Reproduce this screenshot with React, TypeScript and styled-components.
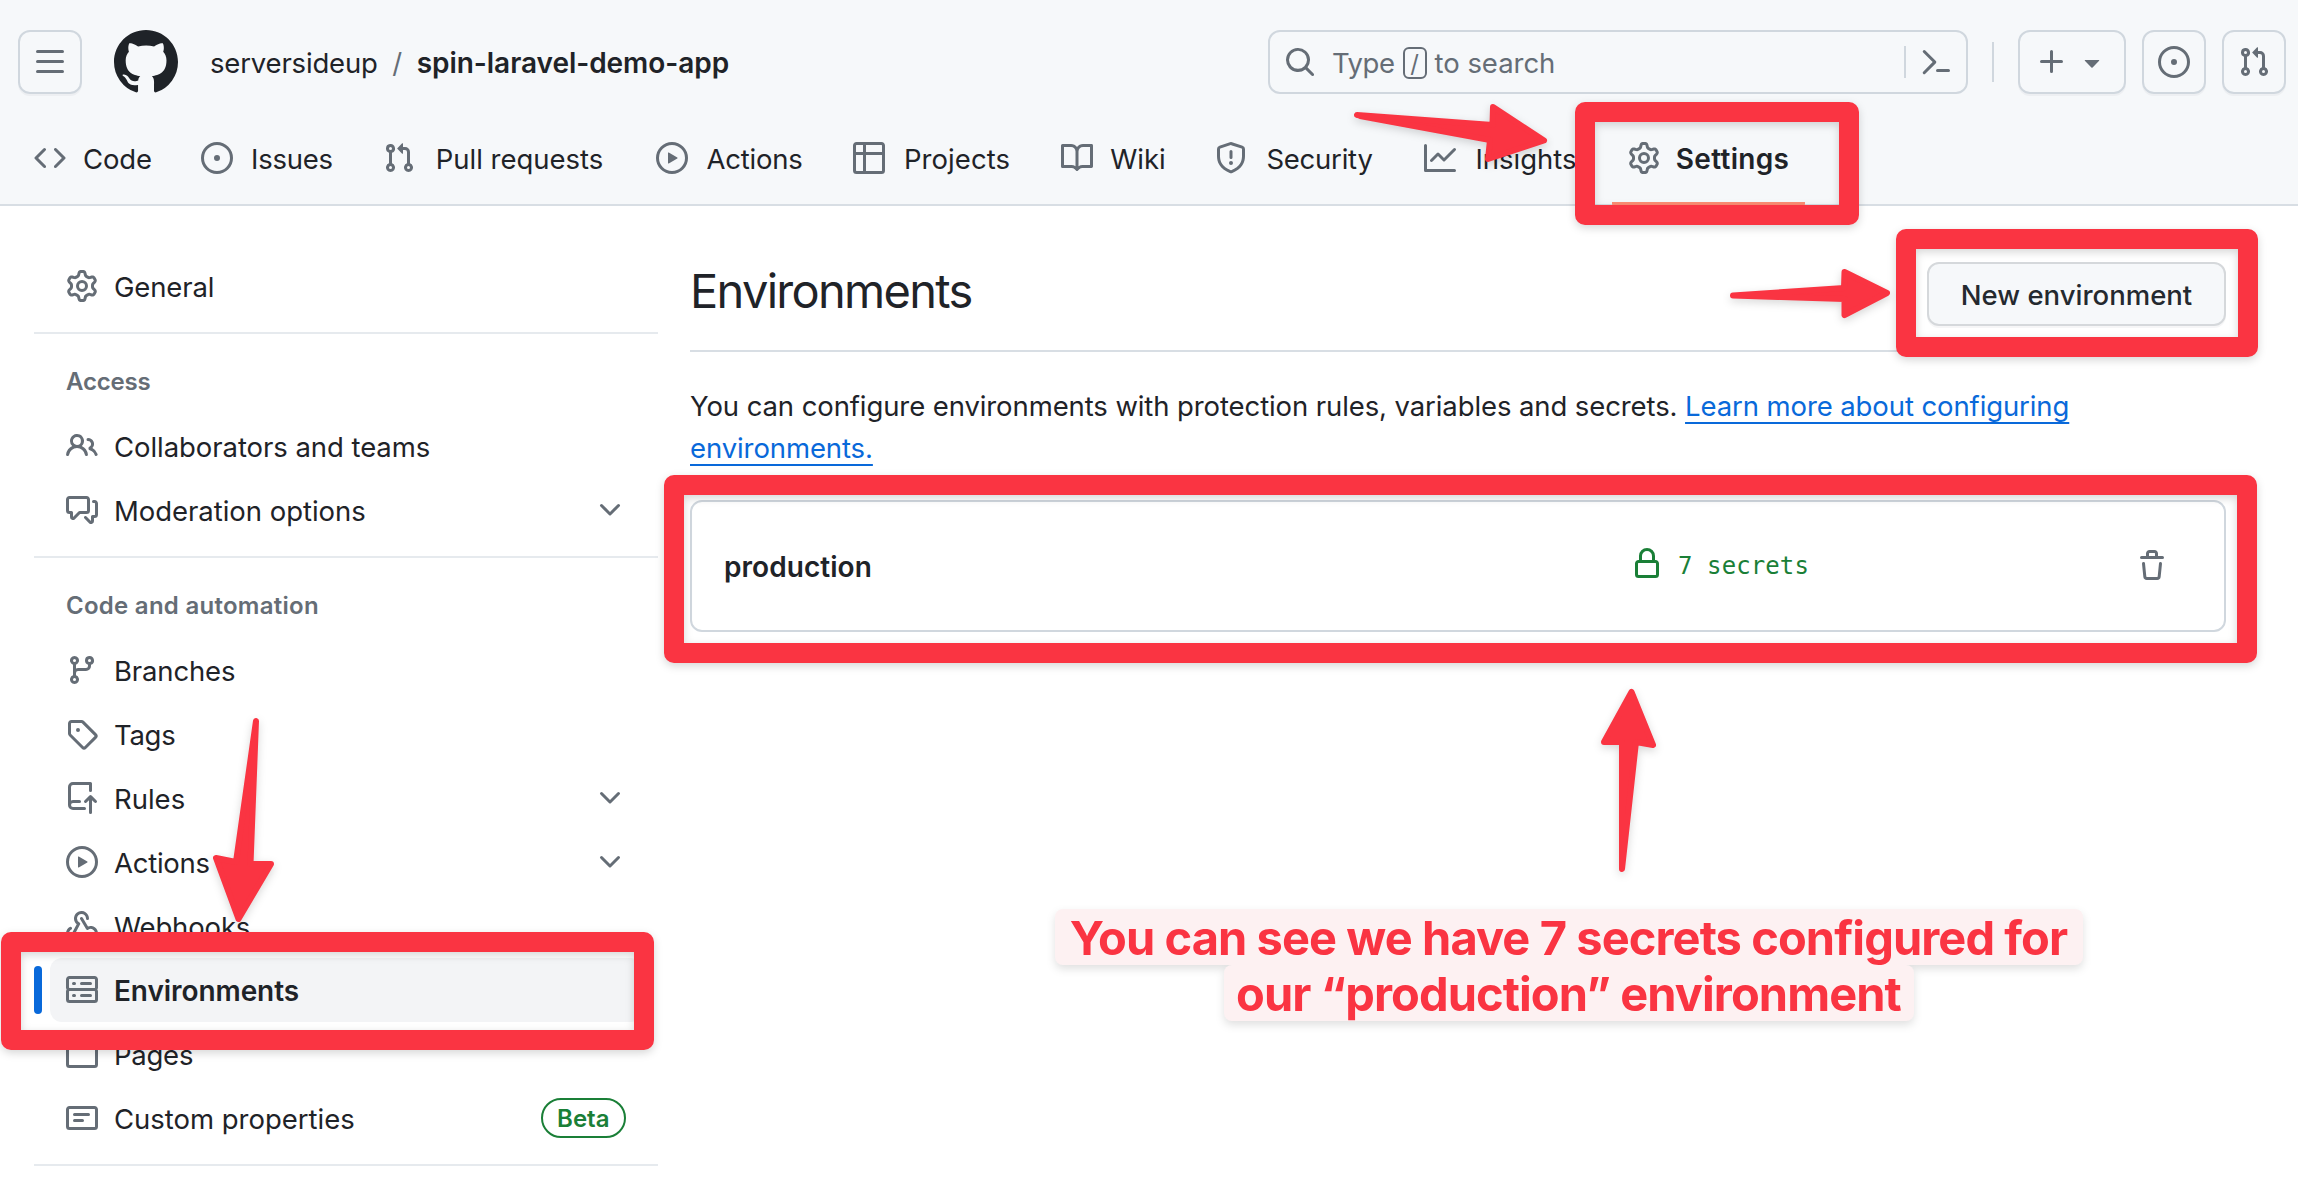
import React from 'react';
import styled, { createGlobalStyle, css } from 'styled-components';

const colors = {
  fg: '#1f2328',
  muted: '#656d76',
  border: '#d0d7de',
  subtle: '#f6f8fa',
  accent: '#0969da',
  success: '#1a7f37',
  mark: '#fa3442',
};

const sans = 'Inter, "Liberation Sans", sans-serif';

const GlobalStyle = createGlobalStyle`
  * { box-sizing: border-box; }
  body { margin: 0; background: #fff; color: ${colors.fg}; font-family: ${sans}; font-size: 27.5px; }
`;

/* ---------- icons ---------- */

const icons = {
  bars: 'M1 2.75A.75.75 0 0 1 1.75 2h12.5a.75.75 0 0 1 0 1.5H1.75A.75.75 0 0 1 1 2.75Zm0 5A.75.75 0 0 1 1.75 7h12.5a.75.75 0 0 1 0 1.5H1.75A.75.75 0 0 1 1 7.75ZM1.75 12h12.5a.75.75 0 0 1 0 1.5H1.75a.75.75 0 0 1 0-1.5Z',
  mark: 'M8 0c4.42 0 8 3.58 8 8a8.013 8.013 0 0 1-5.45 7.59c-.4.08-.55-.17-.55-.38 0-.27.01-1.13.01-2.2 0-.75-.25-1.23-.54-1.48 1.78-.2 3.65-.88 3.65-3.95 0-.88-.31-1.59-.82-2.15.08-.2.36-1.02-.08-2.12 0 0-.67-.22-2.2.82-.64-.18-1.32-.27-2-.27-.68 0-1.36.09-2 .27-1.53-1.03-2.2-.82-2.2-.82-.44 1.1-.16 1.92-.08 2.12-.51.56-.82 1.28-.82 2.15 0 3.06 1.86 3.75 3.64 3.95-.23.2-.44.55-.51 1.07-.46.21-1.61.55-2.33-.66-.15-.24-.6-.83-1.23-.82-.67.01-.27.38.01.53.34.19.73.9.82 1.13.16.45.68 1.31 2.69.94 0 .67.01 1.3.01 1.49 0 .21-.15.45-.55.38A7.995 7.995 0 0 1 0 8c0-4.42 3.58-8 8-8Z',
  search: 'M10.68 11.74a6 6 0 0 1-7.922-8.982 6 6 0 0 1 8.982 7.922l3.04 3.04a.749.749 0 0 1-.326 1.275.749.749 0 0 1-.734-.215ZM11.5 7a4.499 4.499 0 1 0-8.997 0A4.499 4.499 0 0 0 11.5 7Z',
  palette: 'm6.354 8.04-4.773 4.773a.75.75 0 1 0 1.061 1.06L7.945 8.57a.75.75 0 0 0 0-1.06L2.642 2.206a.75.75 0 0 0-1.06 1.061L6.353 8.04ZM8.75 11.5a.75.75 0 0 0 0 1.5h5.5a.75.75 0 0 0 0-1.5h-5.5Z',
  plus: 'M7.75 2a.75.75 0 0 1 .75.75V7h4.25a.75.75 0 0 1 0 1.5H8.5v4.25a.75.75 0 0 1-1.5 0V8.5H2.75a.75.75 0 0 1 0-1.5H7V2.75A.75.75 0 0 1 7.75 2Z',
  triangle: 'm4.427 7.427 3.396 3.396a.25.25 0 0 0 .354 0l3.396-3.396A.25.25 0 0 0 11.396 7H4.604a.25.25 0 0 0-.177.427Z',
  issue: 'M8 9.5a1.5 1.5 0 1 0 0-3 1.5 1.5 0 0 0 0 3ZM8 0a8 8 0 1 1 0 16A8 8 0 0 1 8 0ZM1.5 8a6.5 6.5 0 1 0 13 0 6.5 6.5 0 0 0-13 0Z',
  pull: 'M1.5 3.25a2.25 2.25 0 1 1 3 2.122v5.256a2.251 2.251 0 1 1-1.5 0V5.372A2.25 2.25 0 0 1 1.5 3.25Zm5.677-.177L9.573.677A.25.25 0 0 1 10 .854V2.5h1A2.5 2.5 0 0 1 13.5 5v5.628a2.251 2.251 0 1 1-1.5 0V5a1 1 0 0 0-1-1h-1v1.646a.25.25 0 0 1-.427.177L7.177 3.427a.25.25 0 0 1 0-.354ZM3.75 2.5a.75.75 0 1 0 0 1.5.75.75 0 0 0 0-1.5Zm0 9.5a.75.75 0 1 0 0 1.5.75.75 0 0 0 0-1.5Zm8.25.75a.75.75 0 1 0 1.5 0 .75.75 0 0 0-1.5 0Z',
  code: 'm11.28 3.22 4.25 4.25a.75.75 0 0 1 0 1.06l-4.25 4.25a.749.749 0 0 1-1.275-.326.749.749 0 0 1 .215-.734L13.94 8l-3.72-3.72a.749.749 0 0 1 .326-1.275.749.749 0 0 1 .734.215Zm-6.56 0a.751.751 0 0 1 1.042.018.751.751 0 0 1 .018 1.042L2.06 8l3.72 3.72a.749.749 0 0 1-.326 1.275.749.749 0 0 1-.734-.215L.47 8.53a.75.75 0 0 1 0-1.06Z',
  play: 'M8 0a8 8 0 1 1 0 16A8 8 0 0 1 8 0ZM1.5 8a6.5 6.5 0 1 0 13 0 6.5 6.5 0 0 0-13 0Zm4.879-2.773 4.264 2.559a.25.25 0 0 1 0 .428l-4.264 2.559A.25.25 0 0 1 6 10.559V5.442a.25.25 0 0 1 .379-.215Z',
  table: 'M0 1.75C0 .784.784 0 1.75 0h12.5C15.216 0 16 .784 16 1.75v12.5A1.75 1.75 0 0 1 14.25 16H1.75A1.75 1.75 0 0 1 0 14.25ZM6.5 6.5v8h7.75a.25.25 0 0 0 .25-.25V6.5Zm8-1.5V1.75a.25.25 0 0 0-.25-.25H6.5V5Zm-13 1.5v7.75c0 .138.112.25.25.25H5v-8ZM5 5V1.5H1.75a.25.25 0 0 0-.25.25V5Z',
  book: 'M0 1.75A.75.75 0 0 1 .75 1h4.253c1.227 0 2.317.59 3 1.501A3.743 3.743 0 0 1 11.006 1h4.245a.75.75 0 0 1 .75.75v10.5a.75.75 0 0 1-.75.75h-4.507a2.25 2.25 0 0 0-1.591.659l-.622.621a.75.75 0 0 1-1.06 0l-.622-.621A2.25 2.25 0 0 0 5.258 13H.75a.75.75 0 0 1-.75-.75Zm7.251 10.324.004-5.073-.002-2.253A2.25 2.25 0 0 0 5.003 2.5H1.5v9h3.757a3.75 3.75 0 0 1 1.994.574ZM8.755 4.75l-.004 7.322a3.752 3.752 0 0 1 1.992-.572H14.5v-9h-3.495a2.25 2.25 0 0 0-2.25 2.25Z',
  shield: 'M7.467.133a1.748 1.748 0 0 1 1.066 0l5.25 1.68A1.75 1.75 0 0 1 15 3.48V7c0 1.566-.32 3.182-1.303 4.682-.983 1.498-2.585 2.813-5.032 3.855a1.697 1.697 0 0 1-1.33 0c-2.447-1.042-4.049-2.357-5.032-3.855C1.32 10.182 1 8.566 1 7V3.48a1.75 1.75 0 0 1 1.217-1.667Zm.61 1.429a.25.25 0 0 0-.153 0l-5.25 1.68a.25.25 0 0 0-.174.238V7c0 1.358.275 2.666 1.057 3.86.784 1.194 2.121 2.34 4.366 3.297a.196.196 0 0 0 .154 0c2.245-.956 3.582-2.104 4.366-3.298C13.225 9.666 13.5 8.36 13.5 7V3.48a.251.251 0 0 0-.174-.237l-5.25-1.68ZM8.75 4.75v3a.75.75 0 0 1-1.5 0v-3a.75.75 0 0 1 1.5 0ZM9 10.5a1 1 0 1 1-2 0 1 1 0 0 1 2 0Z',
  graph: 'M1.5 1.75V13.5h13.75a.75.75 0 0 1 0 1.5H.75a.75.75 0 0 1-.75-.75V1.75a.75.75 0 0 1 1.5 0Zm14.28 2.53-5.25 5.25a.75.75 0 0 1-1.06 0L7 7.06 4.28 9.78a.751.751 0 0 1-1.042-.018.751.751 0 0 1-.018-1.042l3.25-3.25a.75.75 0 0 1 1.06 0L10 7.94l4.72-4.72a.751.751 0 0 1 1.042.018.751.751 0 0 1 .018 1.042Z',
  gear: 'M8 0a8.2 8.2 0 0 1 .701.031C9.444.095 9.99.645 10.16 1.29l.288 1.107c.018.066.079.158.212.224.231.114.454.243.668.386.123.082.233.09.299.071l1.103-.303c.644-.176 1.392.021 1.82.63.27.385.506.792.704 1.218.315.675.111 1.422-.364 1.891l-.814.806c-.049.048-.098.147-.088.294.016.257.016.515 0 .772-.01.147.038.246.088.294l.814.806c.475.469.679 1.216.364 1.891a7.977 7.977 0 0 1-.704 1.217c-.428.61-1.176.807-1.82.63l-1.102-.302c-.067-.019-.177-.011-.3.071a5.909 5.909 0 0 1-.668.386c-.133.066-.194.158-.211.224l-.29 1.106c-.168.646-.715 1.196-1.458 1.26a8.006 8.006 0 0 1-1.402 0c-.743-.064-1.289-.614-1.458-1.26l-.289-1.106c-.018-.066-.079-.158-.212-.224a5.738 5.738 0 0 1-.668-.386c-.123-.082-.233-.09-.299-.071l-1.103.303c-.644.176-1.392-.021-1.82-.63a8.12 8.12 0 0 1-.704-1.218c-.315-.675-.111-1.422.363-1.891l.815-.806c.05-.048.098-.147.088-.294a6.214 6.214 0 0 1 0-.772c.01-.147-.038-.246-.088-.294l-.815-.806C.635 6.045.431 5.298.746 4.623a7.92 7.92 0 0 1 .704-1.217c.428-.61 1.176-.807 1.82-.63l1.102.302c.067.019.177.011.3-.071.214-.143.437-.272.668-.386.133-.066.194-.158.211-.224l.29-1.106C6.009.645 6.556.095 7.299.03 7.53.01 7.764 0 8 0Zm-.571 1.525c-.036.003-.108.036-.137.146l-.289 1.105c-.147.561-.549.967-.998 1.189-.173.086-.34.183-.5.29-.417.278-.97.423-1.529.27l-1.103-.303c-.109-.03-.175.016-.195.045-.22.312-.412.644-.573.99-.014.031-.021.11.059.19l.815.806c.411.406.562.957.53 1.456a4.709 4.709 0 0 0 0 .582c.032.499-.119 1.05-.53 1.456l-.815.806c-.081.08-.073.159-.059.19.162.346.353.677.573.989.02.03.085.076.195.046l1.102-.303c.56-.153 1.113-.008 1.53.27.161.107.328.204.501.29.447.222.85.629.997 1.189l.289 1.105c.029.109.101.143.137.146a6.6 6.6 0 0 0 1.142 0c.036-.003.108-.036.137-.146l.289-1.105c.147-.561.549-.967.998-1.189.173-.086.34-.183.5-.29.417-.278.97-.423 1.529-.27l1.103.303c.109.029.175-.016.195-.045.22-.313.411-.644.573-.99.014-.031.021-.11-.059-.19l-.815-.806c-.411-.406-.562-.957-.53-1.456a4.709 4.709 0 0 0 0-.582c-.032-.499.119-1.05.53-1.456l.815-.806c.081-.08.073-.159.059-.19a6.464 6.464 0 0 0-.573-.989c-.02-.03-.085-.076-.195-.046l-1.102.303c-.56.153-1.113.008-1.53-.27a4.44 4.44 0 0 0-.501-.29c-.447-.222-.85-.629-.997-1.189l-.289-1.105c-.029-.11-.101-.143-.137-.146a6.6 6.6 0 0 0-1.142 0ZM11 8a3 3 0 1 1-6 0 3 3 0 0 1 6 0ZM9.5 8a1.5 1.5 0 1 0-3.001.001A1.5 1.5 0 0 0 9.5 8Z',
  people: 'M2 5.5a3.5 3.5 0 1 1 5.898 2.549 5.508 5.508 0 0 1 3.034 4.084.75.75 0 1 1-1.482.235 4 4 0 0 0-7.9 0 .75.75 0 0 1-1.482-.236A5.507 5.507 0 0 1 3.102 8.05 3.493 3.493 0 0 1 2 5.5ZM11 4a3.001 3.001 0 0 1 2.22 5.018 5.01 5.01 0 0 1 2.56 3.012.749.749 0 0 1-.885.954.752.752 0 0 1-.549-.514 3.507 3.507 0 0 0-2.522-2.372.75.75 0 0 1-.574-.73v-.352a.75.75 0 0 1 .416-.672A1.5 1.5 0 0 0 11 5.5.75.75 0 0 1 11 4Zm-5.5-.5a2 2 0 1 0-.001 3.999A2 2 0 0 0 5.5 3.5Z',
  discussion: 'M1.75 1h8.5c.966 0 1.75.784 1.75 1.75v5.5A1.75 1.75 0 0 1 10.25 10H7.061l-2.574 2.573A1.458 1.458 0 0 1 2 11.543V10h-.25A1.75 1.75 0 0 1 0 8.25v-5.5C0 1.784.784 1 1.75 1ZM1.5 2.75v5.5c0 .138.112.25.25.25h1a.75.75 0 0 1 .75.75v2.19l2.72-2.72a.749.749 0 0 1 .53-.22h3.5a.25.25 0 0 0 .25-.25v-5.5a.25.25 0 0 0-.25-.25h-8.5a.25.25 0 0 0-.25.25Zm13 2a.25.25 0 0 0-.25-.25h-.5a.75.75 0 0 1 0-1.5h.5c.966 0 1.75.784 1.75 1.75v5.5A1.75 1.75 0 0 1 14.25 12H14v1.543a1.458 1.458 0 0 1-2.487 1.03L9.22 12.28a.749.749 0 0 1 .326-1.275.749.749 0 0 1 .734.215l2.22 2.22v-2.19a.75.75 0 0 1 .75-.75h1a.25.25 0 0 0 .25-.25Z',
  chevron: 'M12.78 5.22a.749.749 0 0 1 0 1.06l-4.25 4.25a.749.749 0 0 1-1.06 0L3.22 6.28a.749.749 0 1 1 1.06-1.06L8 8.939l3.72-3.719a.749.749 0 0 1 1.06 0Z',
  branch: 'M9.5 3.25a2.25 2.25 0 1 1 3 2.122V6A2.5 2.5 0 0 1 10 8.5H6a1 1 0 0 0-1 1v1.128a2.251 2.251 0 1 1-1.5 0V5.372a2.25 2.25 0 1 1 1.5 0v1.836A2.493 2.493 0 0 1 6 7h4a1 1 0 0 0 1-1v-.628A2.25 2.25 0 0 1 9.5 3.25Zm-6 0a.75.75 0 1 0 1.5 0 .75.75 0 0 0-1.5 0Zm8.25-.75a.75.75 0 1 0 0 1.5.75.75 0 0 0 0-1.5ZM4.25 12a.75.75 0 1 0 0 1.5.75.75 0 0 0 0-1.5Z',
  tag: 'M1 7.775V2.75C1 1.784 1.784 1 2.75 1h5.025c.464 0 .91.184 1.238.513l6.25 6.25a1.75 1.75 0 0 1 0 2.474l-5.026 5.026a1.75 1.75 0 0 1-2.474 0l-6.25-6.25A1.752 1.752 0 0 1 1 7.775Zm1.5 0c0 .066.026.13.073.177l6.25 6.25a.25.25 0 0 0 .354 0l5.025-5.025a.25.25 0 0 0 0-.354l-6.25-6.25a.25.25 0 0 0-.177-.073H2.75a.25.25 0 0 0-.25.25ZM6 5a1 1 0 1 1 0 2 1 1 0 0 1 0-2Z',
  push: 'M1 2.5A2.5 2.5 0 0 1 3.5 0h8.75a.75.75 0 0 1 .75.75v3.5a.75.75 0 0 1-1.5 0V1.5h-8a1 1 0 0 0-1 1v6.708A2.493 2.493 0 0 1 3.5 9h3.25a.75.75 0 0 1 0 1.5H3.5a1 1 0 0 0 0 2h5.75a.75.75 0 0 1 0 1.5H3.5A2.5 2.5 0 0 1 1 11.5Zm13.23 7.79h-.001l-1.224-1.224v6.184a.75.75 0 0 1-1.5 0V9.066L10.28 10.29a.75.75 0 0 1-1.06-1.061l2.505-2.504a.75.75 0 0 1 1.06 0L15.29 9.23a.751.751 0 0 1-.018 1.042.751.751 0 0 1-1.042.018Z',
  webhook: 'M5.5 4.25a2.25 2.25 0 0 1 4.5 0 .75.75 0 0 0 1.5 0 3.75 3.75 0 1 0-6.14 2.889l-2.272 4.258a.75.75 0 0 0 1.324.706L7 7.25a.75.75 0 0 0-.309-1.015A2.25 2.25 0 0 1 5.5 4.25ZM7.364 3.607a.75.75 0 0 1 1.03.257l2.608 4.349a3.75 3.75 0 1 1-.628 6.785.75.75 0 0 1 .752-1.299 2.25 2.25 0 1 0-.033-3.88.75.75 0 0 1-1.03-.256L7.107 4.636a.75.75 0 0 1 .257-1.03ZM2.9 8.776A.75.75 0 0 1 2.625 9.8 2.25 2.25 0 1 0 6 11.75a.75.75 0 0 1 .75-.751h5.5a.75.75 0 0 1 0 1.5H7.425a3.751 3.751 0 1 1-5.55-3.998.75.75 0 0 1 1.024.274Z',
  server: 'M1.75 1h12.5c.966 0 1.75.784 1.75 1.75v4c0 .372-.116.717-.314 1 .198.283.314.628.314 1v4a1.75 1.75 0 0 1-1.75 1.75H1.75A1.75 1.75 0 0 1 0 12.75v-4c0-.358.109-.707.314-1a1.739 1.739 0 0 1-.314-1v-4C0 1.784.784 1 1.75 1ZM1.5 2.75v4c0 .138.112.25.25.25h12.5a.25.25 0 0 0 .25-.25v-4a.25.25 0 0 0-.25-.25H1.75a.25.25 0 0 0-.25.25Zm.25 5.75a.25.25 0 0 0-.25.25v4c0 .138.112.25.25.25h12.5a.25.25 0 0 0 .25-.25v-4a.25.25 0 0 0-.25-.25ZM7 4.75A.75.75 0 0 1 7.75 4h4.5a.75.75 0 0 1 0 1.5h-4.5A.75.75 0 0 1 7 4.75ZM7.75 10h4.5a.75.75 0 0 1 0 1.5h-4.5a.75.75 0 0 1 0-1.5ZM3 4.75A.75.75 0 0 1 3.75 4h.5a.75.75 0 0 1 0 1.5h-.5A.75.75 0 0 1 3 4.75ZM3.75 10h.5a.75.75 0 0 1 0 1.5h-.5a.75.75 0 0 1 0-1.5Z',
  browser: 'M0 2.75C0 1.784.784 1 1.75 1h12.5c.966 0 1.75.784 1.75 1.75v10.5A1.75 1.75 0 0 1 14.25 15H1.75A1.75 1.75 0 0 1 0 13.25ZM14.5 6h-13v7.25c0 .138.112.25.25.25h12.5a.25.25 0 0 0 .25-.25Zm-6-3.5v2h6V2.75a.25.25 0 0 0-.25-.25ZM5 2.5v2h2v-2Zm-3.25 0a.25.25 0 0 0-.25.25V4.5h2v-2Z',
  note: 'M0 3.75C0 2.784.784 2 1.75 2h12.5c.966 0 1.75.784 1.75 1.75v8.5A1.75 1.75 0 0 1 14.25 14H1.75A1.75 1.75 0 0 1 0 12.25Zm1.75-.25a.25.25 0 0 0-.25.25v8.5c0 .138.112.25.25.25h12.5a.25.25 0 0 0 .25-.25v-8.5a.25.25 0 0 0-.25-.25ZM3.5 6.25a.75.75 0 0 1 .75-.75h7a.75.75 0 0 1 0 1.5h-7a.75.75 0 0 1-.75-.75Zm.75 2.25h4a.75.75 0 0 1 0 1.5h-4a.75.75 0 0 1 0-1.5Z',
  lock: 'M4 4a4 4 0 0 1 8 0v2h.25c.966 0 1.75.784 1.75 1.75v5.5A1.75 1.75 0 0 1 12.25 15h-8.5A1.75 1.75 0 0 1 2 13.25v-5.5C2 6.784 2.784 6 3.75 6H4Zm8.25 3.5h-8.5a.25.25 0 0 0-.25.25v5.5c0 .138.112.25.25.25h8.5a.25.25 0 0 0 .25-.25v-5.5a.25.25 0 0 0-.25-.25ZM10.5 6V4a2.5 2.5 0 1 0-5 0v2Z',
  trash: 'M11 1.75V3h2.25a.75.75 0 0 1 0 1.5H2.75a.75.75 0 0 1 0-1.5H5V1.75C5 .784 5.784 0 6.75 0h2.5C10.216 0 11 .784 11 1.75ZM4.496 6.675l.66 6.6a.25.25 0 0 0 .249.225h5.19a.25.25 0 0 0 .249-.225l.66-6.6a.75.75 0 0 1 1.492.149l-.66 6.6A1.748 1.748 0 0 1 10.595 15h-5.19a1.75 1.75 0 0 1-1.741-1.575l-.66-6.6a.75.75 0 1 1 1.492-.15ZM6.5 1.75V3h3V1.75a.25.25 0 0 0-.25-.25h-2.5a.25.25 0 0 0-.25.25Z',
};

type IconName = keyof typeof icons;

const Glyph = styled.svg<{ $size: number }>`
  display: block;
  flex: none;
  width: ${(p) => p.$size}px;
  height: ${(p) => p.$size}px;
  fill: currentColor;
`;

const Icon = ({ name, size = 32 }: { name: IconName; size?: number }) => (
  <Glyph $size={size} viewBox="0 0 16 16" aria-hidden>
    <path d={icons[name]} />
  </Glyph>
);

/* ---------- shared ---------- */

const Text = styled.span<{ $ls?: number; $bold?: boolean }>`
  padding-top: 2px;
  line-height: 40px;
  white-space: nowrap;
  letter-spacing: ${(p) => p.$ls ?? 0}px;
  ${(p) => p.$bold && css`
    font-size: 28px;
    font-weight: 600;
  `}
`;

const Page = styled.div`
  position: relative;
  width: 2298px;
  height: 1200px;
  overflow: hidden;
  background: #fff;
`;

/* ---------- header ---------- */

const Header = styled.header`
  height: 206px;
  background: ${colors.subtle};
  border-bottom: 2px solid #d8dee4;
`;

const TopBar = styled.div`
  display: flex;
  align-items: center;
  height: 94px;
  padding: 30px 12px 0 18px;
`;

const SquareButton = styled.button`
  display: flex;
  flex: none;
  align-items: center;
  justify-content: center;
  gap: 8px;
  min-width: 64px;
  height: 64px;
  padding: 0 14px;
  color: ${colors.muted};
  background: transparent;
  border: 2px solid ${colors.border};
  border-radius: 12px;
  box-shadow: 0 2px 0 rgba(31, 35, 40, 0.04);
`;

const AddButton = styled(SquareButton)`
  padding: 0 16px;
`;

const Logo = styled.a`
  margin: 0 32px;
  color: ${colors.fg};
`;

const Crumbs = styled.nav`
  display: flex;
  align-items: center;
  flex: 1;
`;

const Slash = styled(Text)`
  width: 39px;
  text-align: center;
  color: ${colors.muted};
`;

const SearchBox = styled.div`
  display: flex;
  align-items: center;
  width: 700px;
  height: 64px;
  padding: 0 14px;
  color: ${colors.muted};
  border: 2px solid ${colors.border};
  border-radius: 12px;
`;

const SearchHint = styled.div`
  display: flex;
  flex: 1;
  align-items: center;
  margin-left: 16px;
`;

const KeyCap = styled.kbd`
  display: flex;
  align-items: center;
  justify-content: center;
  width: 24px;
  height: 32px;
  margin: 2px 8px 0 8px;
  font: 24px ${sans};
  border: 2px solid ${colors.muted};
  border-radius: 6px;
`;

const SearchDivider = styled.i`
  width: 2px;
  height: 32px;
  margin-right: 14px;
  background: ${colors.border};
`;

const BarDivider = styled.i`
  width: 2px;
  height: 40px;
  margin: 0 24px;
  background: ${colors.border};
`;

const Actions = styled.div`
  display: flex;
  gap: 16px;
`;

const Tabs = styled.nav`
  display: flex;
  gap: 16px;
  height: 112px;
  padding: 16px 0 0 18px;
`;

const Tab = styled.a<{ $active?: boolean }>`
  display: flex;
  align-items: center;
  gap: 16px;
  height: 96px;
  padding: 0 16px;
  color: ${colors.muted};
  ${(p) => p.$active && css`
    padding-top: 4px;
    border-bottom: 4px solid #fd8c73;
    border-radius: 2px;
  `}
`;

const TabLabel = styled(Text)<{ $w: number }>`
  width: ${(p) => p.$w}px;
  display: flex;
  justify-content: center;
  color: ${colors.fg};
`;

const tabs: { icon: IconName; label: string; w: number; ls?: number; active?: boolean }[] = [
  { icon: 'code', label: 'Code', w: 71, ls: -0.13 },
  { icon: 'issue', label: 'Issues', w: 86, ls: -0.24 },
  { icon: 'pull', label: 'Pull requests', w: 177 },
  { icon: 'play', label: 'Actions', w: 101, ls: -0.26 },
  { icon: 'table', label: 'Projects', w: 112, ls: 0.05 },
  { icon: 'book', label: 'Wiki', w: 58 },
  { icon: 'shield', label: 'Security', w: 113, ls: -0.23 },
  { icon: 'graph', label: 'Insights', w: 108 },
  { icon: 'gear', label: 'Settings', w: 113, ls: 0.3, active: true },
];

/* ---------- sidebar ---------- */

const Body = styled.div`
  display: flex;
  gap: 32px;
  padding: 0 72px 0 34px;
`;

const Sidebar = styled.aside`
  width: 624px;
  padding-top: 48px;
`;

const Group = styled.section`
  padding-bottom: 14px;
  margin-bottom: 16px;
  border-bottom: 2px solid #e6eaee;
`;

const GroupTitle = styled.h3<{ $ls?: number }>`
  height: 64px;
  margin: 0;
  padding: 0 32px;
  font-size: 24px;
  font-weight: 600;
  line-height: 64px;
  letter-spacing: ${(p) => p.$ls ?? 0}px;
  color: ${colors.muted};
`;

const Row = styled.a<{ $active?: boolean }>`
  position: relative;
  display: flex;
  align-items: center;
  gap: 16px;
  height: 64px;
  margin: 0 16px;
  padding: 0 16px;
  color: ${colors.muted};
  border-radius: 12px;
  ${(p) => p.$active && css`
    background: #f3f4f6;
    &::before {
      content: '';
      position: absolute;
      left: -16px;
      top: 8px;
      width: 8px;
      height: 48px;
      border-radius: 4px;
      background: ${colors.accent};
    }
  `}
`;

const RowLabel = styled(Text)`
  flex: 1;
  color: ${colors.fg};
`;

const Beta = styled.span`
  display: flex;
  align-items: center;
  height: 40px;
  padding: 0 14.5px;
  font-size: 24px;
  font-weight: 600;
  color: ${colors.success};
  border: 2px solid ${colors.success};
  border-radius: 20px;
`;

type RowData = { icon: IconName; label: string; ls?: number; expandable?: boolean; beta?: boolean; active?: boolean };

const groups: { title?: string; ls?: number; rows: RowData[] }[] = [
  { rows: [{ icon: 'gear', label: 'General', ls: -0.15 }] },
  {
    title: 'Access',
    ls: -0.2,
    rows: [
      { icon: 'people', label: 'Collaborators and teams', ls: -0.06 },
      { icon: 'discussion', label: 'Moderation options', ls: -0.04, expandable: true },
    ],
  },
  {
    title: 'Code and automation',
    ls: 0.27,
    rows: [
      { icon: 'branch', label: 'Branches', ls: -0.15 },
      { icon: 'tag', label: 'Tags', ls: -0.3 },
      { icon: 'push', label: 'Rules', expandable: true },
      { icon: 'play', label: 'Actions', ls: -0.26, expandable: true },
      { icon: 'webhook', label: 'Webhooks', ls: -0.15 },
      { icon: 'server', label: 'Environments', ls: -0.08, active: true },
      { icon: 'browser', label: 'Pages', ls: -0.25 },
      { icon: 'note', label: 'Custom properties', ls: -0.02, beta: true },
    ],
  },
];

/* ---------- main ---------- */

const Main = styled.main`
  flex: 1;
  padding-top: 48px;
`;

const TitleBar = styled.div`
  display: flex;
  align-items: flex-start;
  justify-content: space-between;
  height: 98px;
  padding-top: 8px;
  border-bottom: 2px solid #d8dee4;
`;

const Title = styled.h1`
  margin: 0;
  padding-top: 1px;
  font-size: 47px;
  font-weight: 400;
  line-height: 56px;
  letter-spacing: -1.7px;
`;

const NewButton = styled.button`
  width: 299px;
  height: 64px;
  padding: 2px 0 0;
  font: 500 27.5px ${sans};
  color: #24292f;
  background: ${colors.subtle};
  border: 2px solid #d5d8db;
  border-radius: 12px;
  box-shadow: 0 2px 0 rgba(31, 35, 40, 0.04);
`;

const Intro = styled.p`
  margin: 33px 0 31px;
  line-height: 42px;
  letter-spacing: -0.1px;
`;

const Link = styled.a`
  color: ${colors.accent};
  text-decoration: underline;
  text-decoration-thickness: 2px;
  text-underline-offset: 6px;
  text-decoration-skip-ink: none;
`;

const Card = styled.div`
  display: grid;
  grid-template-columns: 907px 1fr 32px;
  align-items: center;
  height: 132px;
  padding: 0 56px 0 32px;
  border: 2px solid ${colors.border};
  border-radius: 12px;
`;

const Secrets = styled.div`
  display: flex;
  align-items: center;
  gap: 15px;
  padding-bottom: 4px;
  color: ${colors.success};
  font: 24px "DejaVu Sans Mono", monospace;
  letter-spacing: 0.1px;
`;

const SecretsLabel = styled.span`
  padding-top: 4px;
`;

const Delete = styled.span`
  color: ${colors.muted};
`;

/* ---------- annotations drawn over the page ---------- */

const Frame = styled.div<{ $x: number; $y: number; $w: number; $h: number }>`
  position: absolute;
  left: ${(p) => p.$x}px;
  top: ${(p) => p.$y}px;
  width: ${(p) => p.$w}px;
  height: ${(p) => p.$h}px;
  border: 20px solid ${colors.mark};
  border-radius: 10px;
  filter: drop-shadow(0 3px 4px rgba(0, 0, 0, 0.16));
`;

const Arrows = styled.svg`
  position: absolute;
  inset: 0;
  width: 2298px;
  height: 1200px;
  fill: ${colors.mark};
  stroke: ${colors.mark};
  stroke-width: 6;
  stroke-linejoin: round;
  filter: drop-shadow(0 3px 4px rgba(0, 0, 0, 0.16));
`;

const Caption = styled.div`
  position: absolute;
  left: 1055px;
  top: 909px;
  width: 1028px;
  display: flex;
  flex-direction: column;
  align-items: center;
  filter: drop-shadow(0 4px 4px rgba(0, 0, 0, 0.12));
`;

const CaptionLine = styled.div<{ $w: number }>`
  width: ${(p) => p.$w}px;
  height: 56px;
  text-align: center;
  white-space: nowrap;
  font-size: 47px;
  font-weight: 700;
  line-height: 58px;
  letter-spacing: -0.92px;
  text-indent: -1px;
  color: ${colors.mark};
  background: #fdf1f2;
  border-radius: 8px;
`;

export default function App() {
  return (
    <Page>
      <GlobalStyle />
      <Header>
        <TopBar>
          <SquareButton aria-label="Menu"><Icon name="bars" /></SquareButton>
          <Logo><Icon name="mark" size={64} /></Logo>
          <Crumbs>
            <Text $ls={-0.17}>serversideup</Text>
            <Slash>/</Slash>
            <Text $bold $ls={-0.05}>spin-laravel-demo-app</Text>
          </Crumbs>
          <SearchBox>
            <Icon name="search" />
            <SearchHint>
              <Text $ls={-0.45}>Type</Text>
              <KeyCap>/</KeyCap>
              <Text $ls={-0.04}>to search</Text>
            </SearchHint>
            <SearchDivider />
            <Icon name="palette" />
          </SearchBox>
          <BarDivider />
          <Actions>
            <AddButton aria-label="Create"><Icon name="plus" /><Icon name="triangle" /></AddButton>
            <SquareButton aria-label="Issues"><Icon name="issue" /></SquareButton>
            <SquareButton aria-label="Pull requests"><Icon name="pull" /></SquareButton>
          </Actions>
        </TopBar>
        <Tabs>
          {tabs.map((t) => (
            <Tab key={t.label} $active={t.active}>
              <Icon name={t.icon} />
              <TabLabel $w={t.w} $ls={t.ls} $bold={t.active}>{t.label}</TabLabel>
            </Tab>
          ))}
        </Tabs>
      </Header>

      <Body>
        <Sidebar>
          {groups.map((g, i) => (
            <Group key={i}>
              {g.title && <GroupTitle $ls={g.ls}>{g.title}</GroupTitle>}
              {g.rows.map((r) => (
                <Row key={r.label} $active={r.active}>
                  <Icon name={r.icon} />
                  <RowLabel $ls={r.ls} $bold={r.active}>{r.label}</RowLabel>
                  {r.expandable && <Icon name="chevron" />}
                  {r.beta && <Beta>Beta</Beta>}
                </Row>
              ))}
            </Group>
          ))}
        </Sidebar>

        <Main>
          <TitleBar>
            <Title>Environments</Title>
            <NewButton>New environment</NewButton>
          </TitleBar>
          <Intro>
            You can configure environments with protection rules, variables and secrets.{' '}
            <Link>Learn more about configuring<br />environments.</Link>
          </Intro>
          <Card>
            <Text $bold $ls={0.05}>production</Text>
            <Secrets>
              <Icon name="lock" />
              <SecretsLabel>7 secrets</SecretsLabel>
            </Secrets>
            <Delete><Icon name="trash" /></Delete>
          </Card>
        </Main>
      </Body>

      <Frame $x={1575} $y={102} $w={283.5} $h={123} />
      <Frame $x={1896} $y={229} $w={362} $h={127.5} />
      <Frame $x={664} $y={475} $w={1593} $h={187.5} />
      <Frame $x={1} $y={931.5} $w={653} $h={118} />
      <Arrows viewBox="0 0 2298 1200">
        <path d="M1357 115 1492.5 125 1493 107 1544 140.5 1488 159 1490 140 1360 116Z" />
        <path d="M1733 295.500 1844 288 1844.500 272 1887 293 1844.500 315 1844.500 299Z" />
        <path d="M1631.500 692 1653 745 1636 742 1622 869 1622 742 1604 742Z" />
        <path d="M256 721 250.500 864 271 864 238.500 919 216 858 236 862Z" />
      </Arrows>
      <Caption>
        <CaptionLine $w={1028}>You can see we have 7 secrets configured for</CaptionLine>
        <CaptionLine $w={690}>our “production” environment</CaptionLine>
      </Caption>
    </Page>
  );
}
